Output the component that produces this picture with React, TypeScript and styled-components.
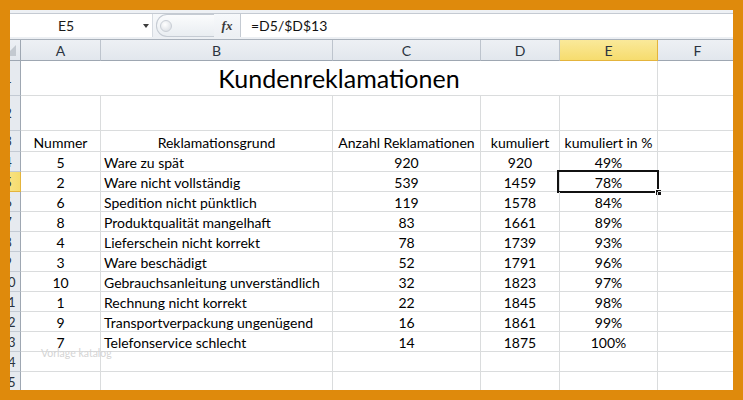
import styled, { createGlobalStyle } from 'styled-components';

const GlobalStyle = createGlobalStyle`
  html, body {
    margin: 0;
    padding: 0;
    background: #df8a0c;
  }
  body {
    font-family: Lato, "Open Sans", sans-serif;
  }
`;

const Frame = styled.div`
  width: 743px;
  height: 400px;
  box-sizing: border-box;
  padding: 10px;
  background: #df8a0c;
`;

const Window = styled.div`
  position: relative;
  width: 100%;
  height: 100%;
  overflow: hidden;
  background: #ffffff;
  display: flex;
  flex-direction: column;
`;

const TopStrip = styled.div`
  height: 3px;
  flex: none;
  background: #eef1f5;
  border-bottom: 1px solid #c4cad2;
`;

const FormulaBar = styled.div`
  height: 26px;
  flex: none;
  display: flex;
  align-items: stretch;
  background: linear-gradient(#f7f9fb, #eceff3);
  border-bottom: 1px solid #a9b1bb;
  box-sizing: border-box;
  padding-bottom: 2px;
`;

const NameBox = styled.div`
  width: 142px;
  flex: none;
  display: flex;
  align-items: center;
  background: #ffffff;
  border-right: 1px solid #d6dbe1;
  font-size: 14px;
  color: #1b1b1b;
`;

const NameText = styled.span`
  width: 112px;
  text-align: center;
`;

const Caret = styled.span`
  width: 0;
  height: 0;
  margin-left: 21px;
  border-left: 3.5px solid transparent;
  border-right: 3.5px solid transparent;
  border-top: 4px solid #3c3c3c;
`;

const Grip = styled.div`
  width: 58px;
  margin: 0 0 0 3px;
  flex: none;
  border: 1px solid #c5cbd3;
  border-right: none;
  border-radius: 11px 0 0 11px;
  background: linear-gradient(#fbfcfd, #e9edf1);
  display: flex;
  align-items: center;
  padding-left: 3px;
  box-sizing: border-box;
`;

const GripDot = styled.span`
  width: 10px;
  height: 10px;
  border-radius: 50%;
  background: radial-gradient(circle at 40% 35%, #ffffff, #d4d9df);
  border: 1px solid #c9ced5;
`;

const FxButton = styled.div`
  width: 26px;
  flex: none;
  display: flex;
  align-items: center;
  justify-content: center;
  font-family: "Liberation Serif", serif;
  font-style: italic;
  font-weight: bold;
  font-size: 13px;
  color: #3a3a3a;
  border-right: 1px solid #c4cad2;
  background: linear-gradient(#f7f9fb, #eceff3);
`;

const FormulaInput = styled.div`
  flex: 1;
  display: flex;
  align-items: center;
  padding-left: 10px;
  background: #ffffff;
  font-size: 14px;
  color: #111;
`;

const Sheet = styled.div`
  position: relative;
  flex: 1;
  margin-left: -14px;
  display: flex;
  flex-direction: column;
`;

const Row = styled.div<{ $h: number }>`
  display: grid;
  grid-template-columns: 25px 80px 232px 148px 79px 98px 80px;
  height: ${(p) => p.$h}px;
  flex: none;
`;

const ColHead = styled.div<{ $sel?: boolean }>`
  box-sizing: border-box;
  display: flex;
  align-items: center;
  justify-content: center;
  font-size: 14px;
  color: #2b3340;
  border-right: 1px solid ${(p) => (p.$sel ? '#e4b43c' : '#bdc4cd')};
  border-bottom: 1px solid ${(p) => (p.$sel ? '#e4b43c' : '#9ea7b2')};
  background: ${(p) =>
    p.$sel ? 'linear-gradient(#fae99a, #f6dc6e)' : 'linear-gradient(#edf0f4, #e2e7ed)'};
`;

const Corner = styled.div`
  position: relative;
  box-sizing: border-box;
  border-right: 1px solid #9ea7b2;
  border-bottom: 1px solid #9ea7b2;
  background: linear-gradient(#edf0f4, #e2e7ed);
  &::after {
    content: '';
    position: absolute;
    right: 4px;
    bottom: 4px;
    width: 0;
    height: 0;
    border-left: 11px solid transparent;
    border-bottom: 11px solid #c3c9d0;
  }
`;

const RowHead = styled.div<{ $sel?: boolean }>`
  box-sizing: border-box;
  display: flex;
  align-items: center;
  justify-content: center;
  font-size: 13px;
  color: #2b3340;
  border-right: 1px solid ${(p) => (p.$sel ? '#e4b43c' : '#9ea7b2')};
  border-bottom: 1px solid ${(p) => (p.$sel ? '#e4b43c' : '#c3cad3')};
  background: ${(p) => (p.$sel ? 'linear-gradient(90deg, #fae99a, #f6dc6e)' : '#e6eaef')};
`;

const Cell = styled.div<{ $align?: 'left' | 'center'; $span?: number; $big?: boolean }>`
  position: relative;
  box-sizing: border-box;
  display: flex;
  align-items: flex-end;
  justify-content: ${(p) => (p.$align === 'left' ? 'flex-start' : 'center')};
  padding: ${(p) => (p.$big ? '0 0 2px' : p.$align === 'left' ? '0 0 0 3px' : '0')};
  grid-column: ${(p) => (p.$span ? `span ${p.$span}` : 'auto')};
  border-right: 1px solid #dadcdd;
  border-bottom: 1px solid #dadcdd;
  font-size: ${(p) => (p.$big ? '25px' : '14px')};
  color: #000;
  white-space: nowrap;
`;

const Selected = styled.span`
  position: absolute;
  left: -3px;
  top: -2px;
  right: -2px;
  bottom: -2px;
  border: 2px solid #111;
  pointer-events: none;
  &::after {
    content: '';
    position: absolute;
    right: -5px;
    bottom: -5px;
    width: 5px;
    height: 5px;
    background: #111;
    border: 1px solid #fff;
  }
`;

const Watermark = styled.span`
  position: absolute;
  left: 45px;
  top: 307px;
  font-size: 10.5px;
  color: #d4d4d4;
`;

const rows = [
  [5, 'Ware zu spät', 920, 920, '49%'],
  [2, 'Ware nicht vollständig', 539, 1459, '78%'],
  [6, 'Spedition nicht pünktlich', 119, 1578, '84%'],
  [8, 'Produktqualität mangelhaft', 83, 1661, '89%'],
  [4, 'Lieferschein nicht korrekt', 78, 1739, '93%'],
  [3, 'Ware beschädigt', 52, 1791, '96%'],
  [10, 'Gebrauchsanleitung unverständlich', 32, 1823, '97%'],
  [1, 'Rechnung nicht korrekt', 22, 1845, '98%'],
  [9, 'Transportverpackung ungenügend', 16, 1861, '99%'],
  [7, 'Telefonservice schlecht', 14, 1875, '100%'],
] as const;

export default function App() {
  return (
    <Frame>
      <GlobalStyle />
      <Window>
        <TopStrip />
        <FormulaBar>
          <NameBox>
            <NameText>E5</NameText>
            <Caret />
          </NameBox>
          <Grip>
            <GripDot />
          </Grip>
          <FxButton>fx</FxButton>
          <FormulaInput>=D5/$D$13</FormulaInput>
        </FormulaBar>

        <Sheet>
          <Row $h={21}>
            <Corner />
            <ColHead>A</ColHead>
            <ColHead>B</ColHead>
            <ColHead>C</ColHead>
            <ColHead>D</ColHead>
            <ColHead $sel>E</ColHead>
            <ColHead>F</ColHead>
          </Row>

          <Row $h={35}>
            <RowHead>1</RowHead>
            <Cell $span={5} $big>
              Kundenreklamationen
            </Cell>
            <Cell />
          </Row>

          <Row $h={35}>
            <RowHead>2</RowHead>
            <Cell />
            <Cell />
            <Cell />
            <Cell />
            <Cell />
            <Cell />
          </Row>

          <Row $h={21}>
            <RowHead>3</RowHead>
            <Cell>Nummer</Cell>
            <Cell>Reklamationsgrund</Cell>
            <Cell>Anzahl Reklamationen</Cell>
            <Cell>kumuliert</Cell>
            <Cell>kumuliert in %</Cell>
            <Cell />
          </Row>

          {rows.map(([nr, reason, count, cum, pct], i) => (
            <Row $h={20} key={reason}>
              <RowHead $sel={i === 1}>{i + 4}</RowHead>
              <Cell>{nr}</Cell>
              <Cell $align="left">{reason}</Cell>
              <Cell>{count}</Cell>
              <Cell>{cum}</Cell>
              <Cell>
                {pct}
                {i === 1 && <Selected />}
              </Cell>
              <Cell />
            </Row>
          ))}

          <Row $h={20}>
            <RowHead>14</RowHead>
            <Cell />
            <Cell />
            <Cell />
            <Cell />
            <Cell />
            <Cell />
          </Row>
          <Row $h={20}>
            <RowHead>15</RowHead>
            <Cell />
            <Cell />
            <Cell />
            <Cell />
            <Cell />
            <Cell />
          </Row>

          <Watermark>Vorlage katalog</Watermark>
        </Sheet>
      </Window>
    </Frame>
  );
}
